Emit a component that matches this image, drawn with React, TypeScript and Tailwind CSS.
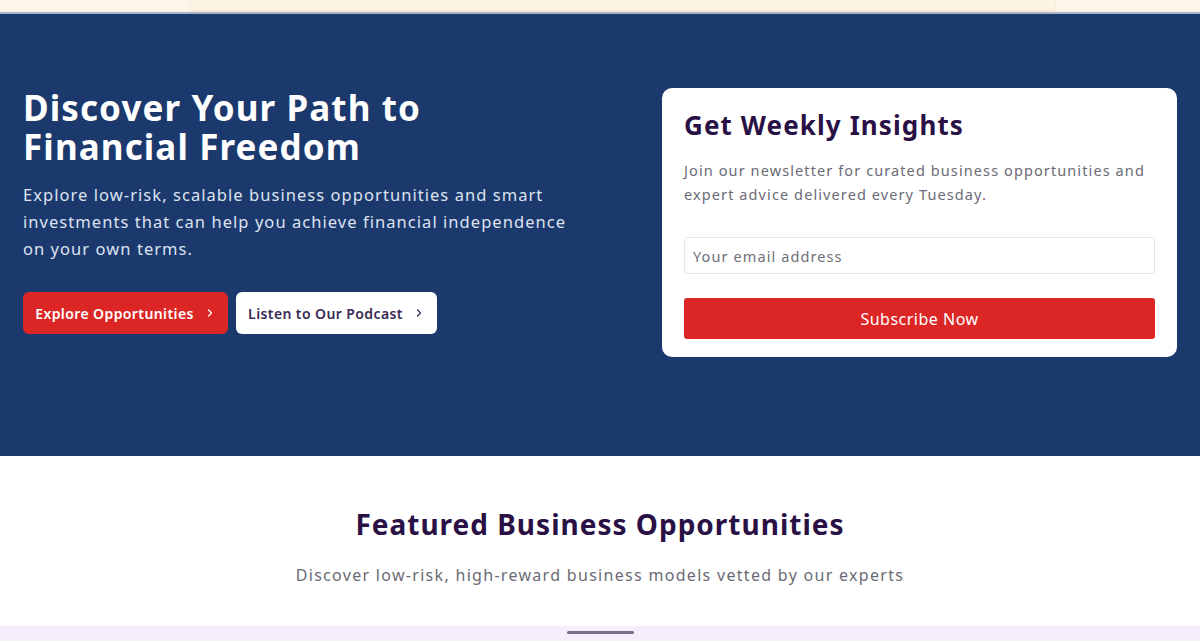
import React from "react";

const Chevron = ({ className = "" }: { className?: string }) => (
  <svg viewBox="0 0 24 24" width="12" height="12" fill="none" stroke="currentColor" strokeWidth="2.5" strokeLinecap="round" strokeLinejoin="round" className={className}>
    <path d="M9 6l6 6-6 6" />
  </svg>
);

export default function App() {
  return (
    <div className="min-h-[641px] w-full bg-white" style={{ fontFamily: '"Noto Sans", "Open Sans", sans-serif' }}>
      {/* top strip */}
      <div className="h-[12px] bg-[#fdf6e8] flex pl-[190px]">
        <div className="w-[865px] h-[10px] bg-[#fcf5e3] shadow-[0_1px_2px_rgba(180,160,120,0.25)]" />
      </div>
      <div className="h-[2px] bg-[#aab4c8]" />
      {/* hero */}
      <section className="bg-[#1c396e] h-[442px] px-[23px] pt-[74px]">
        <div className="grid grid-cols-[1fr_515px] gap-[24px] items-start">
          <div>
            <h1 className="text-white font-bold text-[35px] leading-[39px] tracking-[1.1px]">
              Discover Your Path to<br />Financial Freedom
            </h1>
            <p className="mt-[15px] text-[#dde3ee] text-[16.5px] leading-[27px] tracking-[1.05px] max-w-[560px]">
              Explore low-risk, scalable business opportunities and smart investments that can help you achieve financial independence on your own terms.
            </p>
            <div className="mt-[30px] flex gap-[8px]">
              <button className="h-[42px] w-[205px] rounded-[6px] bg-[#dc2626] text-white text-[14px] font-semibold flex items-center justify-center gap-[10px] tracking-[0.4px]">
                Explore Opportunities <Chevron />
              </button>
              <button className="h-[42px] w-[201px] rounded-[6px] bg-white text-[#3a2a55] text-[14px] font-semibold flex items-center justify-center gap-[10px] tracking-[0.4px]">
                Listen to Our Podcast <Chevron />
              </button>
            </div>
          </div>
          <div className="bg-white rounded-[10px] px-[22px] pt-[20px] pb-[18px]">
            <h2 className="text-[#2a1145] font-bold text-[26px] leading-[34px] tracking-[1.1px]">Get Weekly Insights</h2>
            <p className="mt-[16px] text-[#6b6b76] text-[14.5px] leading-[24px] tracking-[1.1px]">
              Join our newsletter for curated business opportunities and expert advice delivered every Tuesday.
            </p>
            <input
              className="mt-[31px] w-full h-[37px] border border-[#e6e6ea] rounded-[3px] px-[8px] text-[14.5px] tracking-[1.1px] placeholder:text-[#6f6f78] outline-none"
              placeholder="Your email address"
            />
            <button className="mt-[24px] w-full h-[41px] rounded-[3px] bg-[#dc2626] text-white text-[16px] tracking-[0.5px]">
              Subscribe Now
            </button>
          </div>
        </div>
      </section>
      {/* featured */}
      <section className="h-[170px] flex flex-col items-center pt-[48px]">
        <h2 className="text-[#2a1145] font-bold text-[28px] leading-[40px] tracking-[1px]">Featured Business Opportunities</h2>
        <p className="mt-[19px] text-[#6b6b73] text-[16px] leading-[24px] tracking-[1.3px]">
          Discover low-risk, high-reward business models vetted by our experts
        </p>
      </section>
      <div className="h-[15px] bg-[#f6eefb] flex justify-center pt-[5px]">
        <div className="w-[67px] h-[3px] rounded-full bg-[#7a7088]" />
      </div>
    </div>
  );
}
